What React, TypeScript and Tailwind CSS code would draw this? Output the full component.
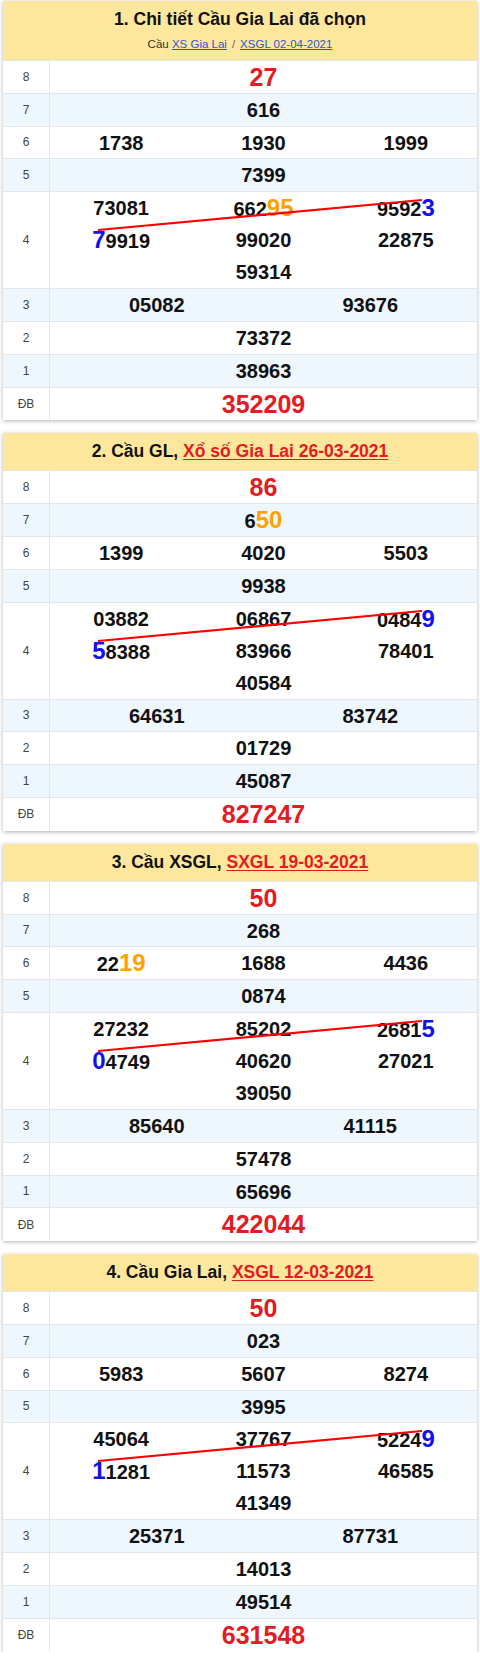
import React from "react";

type Seg = string | { t: string; c: "b" | "o" };
type Num = Seg[];

interface CardData {
  title: React.ReactNode;
  sub?: React.ReactNode;
  g8: string;
  g7: Num;
  g6: Num[];
  g5: string;
  g4: Num[];
  g3: string[];
  g2: string;
  g1: string;
  db: string;
}

const cards: CardData[] = [
  {
    title: <span>1. Chi tiết Cầu Gia Lai đã chọn</span>,
    sub: (
      <div className="text-[11.5px] font-normal text-[#333] leading-none mt-[11px]">
        Cầu <span className="text-[#2b56c9] underline">XS Gia Lai</span>
        <span className="text-[#666] mx-[5px]">/</span>
        <span className="text-[#2b56c9] underline">XSGL 02-04-2021</span>
      </div>
    ),
    g8: "27",
    g7: ["616"],
    g6: [["1738"], ["1930"], ["1999"]],
    g5: "7399",
    g4: [["73081"], ["662", { t: "95", c: "o" }], ["9592", { t: "3", c: "b" }], [{ t: "7", c: "b" }, "9919"], ["99020"], ["22875"], ["59314"]],
    g3: ["05082", "93676"],
    g2: "73372",
    g1: "38963",
    db: "352209",
  },
  {
    title: (
      <span>
        2. Cầu GL, <span className="text-[#e31b23] underline underline-offset-2">Xổ số Gia Lai 26-03-2021</span>
      </span>
    ),
    g8: "86",
    g7: ["6", { t: "50", c: "o" }],
    g6: [["1399"], ["4020"], ["5503"]],
    g5: "9938",
    g4: [["03882"], ["06867"], ["0484", { t: "9", c: "b" }], [{ t: "5", c: "b" }, "8388"], ["83966"], ["78401"], ["40584"]],
    g3: ["64631", "83742"],
    g2: "01729",
    g1: "45087",
    db: "827247",
  },
  {
    title: (
      <span>
        3. Cầu XSGL, <span className="text-[#e31b23] underline underline-offset-2">SXGL 19-03-2021</span>
      </span>
    ),
    g8: "50",
    g7: ["268"],
    g6: [["22", { t: "19", c: "o" }], ["1688"], ["4436"]],
    g5: "0874",
    g4: [["27232"], ["85202"], ["2681", { t: "5", c: "b" }], [{ t: "0", c: "b" }, "4749"], ["40620"], ["27021"], ["39050"]],
    g3: ["85640", "41115"],
    g2: "57478",
    g1: "65696",
    db: "422044",
  },
  {
    title: (
      <span>
        4. Cầu Gia Lai, <span className="text-[#e31b23] underline underline-offset-2">XSGL 12-03-2021</span>
      </span>
    ),
    g8: "50",
    g7: ["023"],
    g6: [["5983"], ["5607"], ["8274"]],
    g5: "3995",
    g4: [["45064"], ["37767"], ["5224", { t: "9", c: "b" }], [{ t: "1", c: "b" }, "1281"], ["11573"], ["46585"], ["41349"]],
    g3: ["25371", "87731"],
    g2: "14013",
    g1: "49514",
    db: "631548",
  },
];

function N({ n }: { n: Num }) {
  return (
    <span>
      {n.map((s, i) =>
        typeof s === "string" ? (
          <span key={i}>{s}</span>
        ) : (
          <span
            key={i}
            className={
              s.c === "b"
                ? "text-[#1010f0] text-[24px]"
                : "text-[#ffa200] text-[24px]"
            }
          >
            {s.t}
          </span>
        )
      )}
    </span>
  );
}

function Row({
  label,
  alt,
  children,
  last,
  tall,
}: {
  label: string;
  alt?: boolean;
  children: React.ReactNode;
  last?: boolean;
  tall?: boolean;
}) {
  return (
    <div
      className={`flex ${alt ? "bg-[#eef6fe]" : "bg-white"} ${last ? "" : "border-b border-[#e3e6ea]"} ${tall ? "h-[97px]" : "h-[32.8px]"}`}
    >
      <div className="w-[47px] shrink-0 border-r border-[#e3e6ea] flex items-center justify-center text-[12px] text-[#444]">
        {label}
      </div>
      <div className="flex-1 relative">{children}</div>
    </div>
  );
}

const numCls = "text-[20px] font-bold text-[#111] leading-[32px]";

function Card({ d, first }: { d: CardData; first?: boolean }) {
  return (
    <div className="bg-white shadow-[0_1px_4px_rgba(0,0,0,0.3)]">
      <div
        className={`bg-[#fde79c] border-b border-[#e3e6ea] flex flex-col items-center justify-center ${first ? "h-[60px]" : "h-[38px]"}`}
      >
        <div className="text-[17.5px] font-bold text-[#111] leading-none">{d.title}</div>
        {d.sub}
      </div>
      <Row label="8">
        <div className="text-center text-[25px] font-bold text-[#e31b23] leading-[32px]">{d.g8}</div>
      </Row>
      <Row label="7" alt>
        <div className={`text-center ${numCls}`}>
          <N n={d.g7} />
        </div>
      </Row>
      <Row label="6">
        <div className={`grid grid-cols-3 text-center ${numCls}`}>
          {d.g6.map((n, i) => (
            <div key={i}>
              <N n={n} />
            </div>
          ))}
        </div>
      </Row>
      <Row label="5" alt>
        <div className={`text-center ${numCls}`}>{d.g5}</div>
      </Row>
      <Row label="4" tall>
        <div className={`flex flex-wrap justify-center text-center ${numCls}`}>
          {d.g4.map((n, i) => (
            <div key={i} className="w-1/3 h-[32px]">
              <N n={n} />
            </div>
          ))}
        </div>
        <svg className="absolute left-0 top-0 pointer-events-none" width="427" height="97">
          <line x1="48" y1="38" x2="372" y2="8" stroke="#f00" strokeWidth="2.2" />
        </svg>
      </Row>
      <Row label="3" alt>
        <div className={`grid grid-cols-2 text-center ${numCls}`}>
          {d.g3.map((n, i) => (
            <div key={i}>{n}</div>
          ))}
        </div>
      </Row>
      <Row label="2">
        <div className={`text-center ${numCls}`}>{d.g2}</div>
      </Row>
      <Row label="1" alt>
        <div className={`text-center ${numCls}`}>{d.g1}</div>
      </Row>
      <Row label="ĐB" last>
        <div className="text-center text-[25px] font-bold text-[#e31b23] leading-[32px]">{d.db}</div>
      </Row>
    </div>
  );
}

export default function App() {
  return (
    <div
      className="w-[480px] bg-white px-[3px] pt-[1px] flex flex-col gap-[13px]"
      style={{ fontFamily: '"Liberation Sans", Arial, sans-serif' }}
    >
      {cards.map((d, i) => (
        <Card key={i} d={d} first={i === 0} />
      ))}
    </div>
  );
}
